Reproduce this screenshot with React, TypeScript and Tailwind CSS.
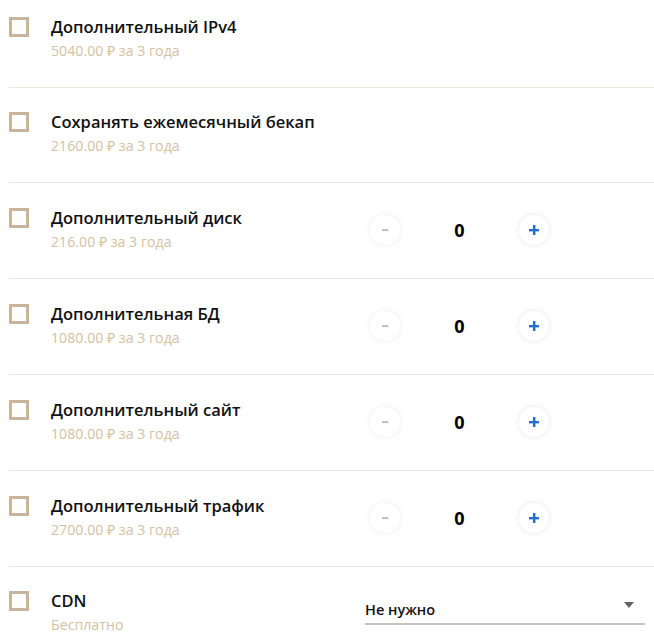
import React from "react";

const rows = [
  { title: "Дополнительный IPv4", price: "5040.00 ₽ за 3 года", stepper: false, h: "h-[88px] pt-[17px]" },
  { title: "Сохранять ежемесячный бекап", price: "2160.00 ₽ за 3 года", stepper: false, h: "h-[95px] pt-[24px]" },
  { title: "Дополнительный диск", price: "216.00 ₽ за 3 года", stepper: true, h: "h-[96px] pt-[25px]" },
  { title: "Дополнительная БД", price: "1080.00 ₽ за 3 года", stepper: true, h: "h-[96px] pt-[25px]" },
  { title: "Дополнительный сайт", price: "1080.00 ₽ за 3 года", stepper: true, h: "h-[96px] pt-[25px]" },
  { title: "Дополнительный трафик", price: "2700.00 ₽ за 3 года", stepper: true, h: "h-[96px] pt-[25px]" },
];

function Stepper() {
  return (
    <div className="flex items-center ml-auto mr-[105px] mt-[7px]">
      <button className="w-[30px] h-[30px] rounded-full bg-white shadow-[0_0_6px_rgba(0,0,0,0.08)] flex items-center justify-center">
        <span className="block w-[6px] h-[2px] bg-[#c9bfb8]" />
      </button>
      <span className="w-[119px] text-center text-[18px] font-bold text-black">0</span>
      <button className="w-[30px] h-[30px] rounded-full bg-white shadow-[0_0_6px_rgba(0,0,0,0.1)] flex items-center justify-center">
        <svg width="12" height="12" viewBox="0 0 12 12">
          <rect x="5" y="1" width="2.4" height="10" fill="#1e6fd4" />
          <rect x="1" y="5" width="10" height="2.4" fill="#1e6fd4" />
        </svg>
      </button>
    </div>
  );
}

function Checkbox() {
  return <div className="w-[20px] h-[20px] border-[3px] border-[#c9b59b] shrink-0 bg-white" />;
}

export default function App() {
  return (
    <div className="w-[654px] h-[640px] overflow-hidden bg-white" style={{ fontFamily: '"Open Sans", sans-serif' }}>
      {rows.map((r, i) => (
        <div key={i} className={`ml-[9px] border-b border-[#ece8dc] flex items-start ${r.h}`}>
          <Checkbox />
          <div className="ml-[22px] -mt-[2px]">
            <div className="text-[16.5px] font-semibold text-[#111] leading-[24px]">{r.title}</div>
            <div className="text-[14.2px] text-[#d4c2a3] leading-[22px] mt-[1px]">{r.price}</div>
          </div>
          {r.stepper && <Stepper />}
        </div>
      ))}
      <div className="ml-[9px] flex items-start pt-[24px]">
        <Checkbox />
        <div className="ml-[22px] -mt-[2px]">
          <div className="text-[16.5px] font-semibold text-[#111] leading-[24px]">CDN</div>
          <div className="text-[14.2px] text-[#d4c2a3] leading-[22px] mt-[1px]">Бесплатно</div>
        </div>
        <div className="ml-auto mr-[9px] w-[280px] mt-[6px] border-b-2 border-[#c9c2bb] flex items-center justify-between h-[28px]">
          <span className="text-[14.5px] font-semibold text-[#111]">Не нужно</span>
          <svg width="12" height="8" viewBox="0 0 12 8" className="mr-[10px] -mt-[10px]">
            <path d="M1 1 L11 1 L6 7 Z" fill="#6b6360" />
          </svg>
        </div>
      </div>
    </div>
  );
}
